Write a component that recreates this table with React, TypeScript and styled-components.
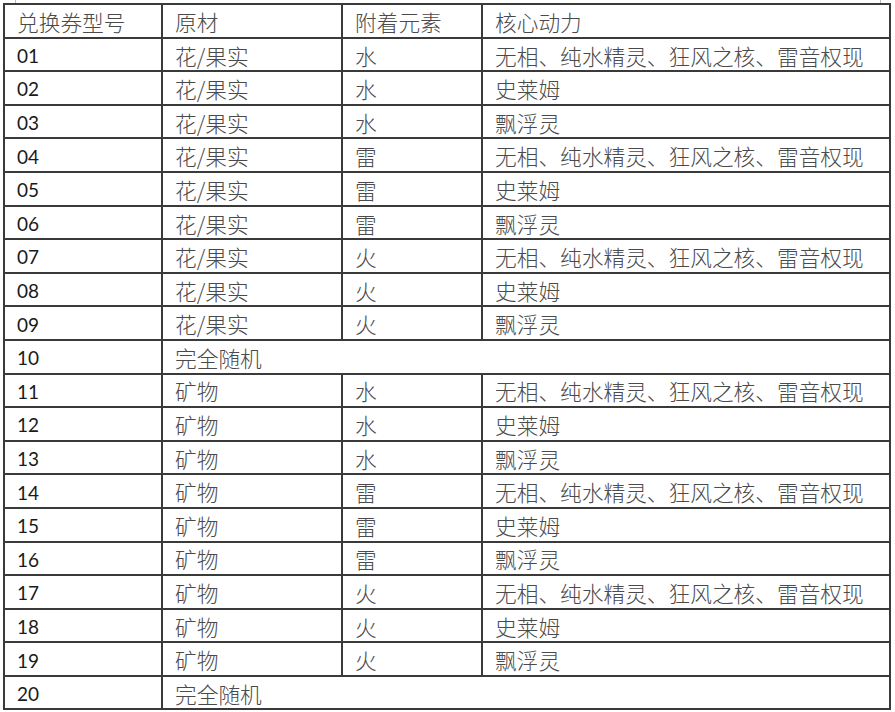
import styled, { createGlobalStyle } from "styled-components";

const GlobalStyle = createGlobalStyle`
  html, body {
    margin: 0;
    padding: 0;
    background: #ffffff;
  }
  body {
    font-family: "Noto Sans CJK SC", sans-serif;
  }
`;

// 兑换券一览
type Row = {
  id: string;
  material: string;
  element?: string;
  core?: string;
};

const CORES = ["无相、纯水精灵、狂风之核、雷音权现", "史莱姆", "飘浮灵"];
const ELEMENTS = ["水", "雷", "火"];

const buildRows = (): Row[] => {
  const rows: Row[] = [];
  let n = 1;
  ["花/果实", "矿物"].forEach((material) => {
    ELEMENTS.forEach((element) => {
      CORES.forEach((core) => {
        rows.push({ id: String(n).padStart(2, "0"), material, element, core });
        n++;
      });
    });
    rows.push({ id: String(n).padStart(2, "0"), material: "完全随机" });
    n++;
  });
  return rows;
};

const rows = buildRows();

const App = (): JSX.Element => {
  return (
    <>
      <GlobalStyle />
      <Page>
        <Table>
          <colgroup>
            <col style={{ width: 158 }} />
            <col style={{ width: 180 }} />
            <col style={{ width: 140 }} />
            <col />
          </colgroup>
          <thead>
            <tr>
              <Cell>兑换券型号</Cell>
              <Cell>原材</Cell>
              <Cell>附着元素</Cell>
              <Cell>核心动力</Cell>
            </tr>
          </thead>
          <tbody>
            {rows.map((row) => (
              <tr key={row.id}>
                <Cell $num>{row.id}</Cell>
                {row.element ? (
                  <>
                    <Cell>{row.material}</Cell>
                    <Cell>{row.element}</Cell>
                    <Cell>{row.core}</Cell>
                  </>
                ) : (
                  <Cell colSpan={3}>{row.material}</Cell>
                )}
              </tr>
            ))}
          </tbody>
        </Table>
      </Page>
    </>
  );
};

const Page = styled.div`
  position: relative;
  padding: 3px 0 0 3px;
  width: 895px;
  height: 712px;
  box-sizing: border-box;
  overflow: hidden;

  /* Word 页面角标 */
  &::before,
  &::after {
    content: "";
    position: absolute;
    top: 0;
    width: 1px;
    height: 3px;
    background: #b8b8b8;
  }
  &::before {
    left: 15px;
  }
  &::after {
    left: 880px;
  }
`;

const Table = styled.table`
  border-collapse: collapse;
  table-layout: fixed;
  width: 888px;

  tr {
    height: 33.6px;
  }
`;

const Cell = styled.td<{ $num?: boolean }>`
  border: 2px solid #3a3a3a;
  padding: 2px 0 0 12px;
  text-align: left;
  white-space: nowrap;
  line-height: 1;
  font-family: ${({ $num }) =>
    $num ? `Lato, "Liberation Sans", sans-serif` : `"Noto Sans CJK SC", sans-serif`};
  font-size: ${({ $num }) => ($num ? "19px" : "21.7px")};
  font-weight: ${({ $num }) => ($num ? 400 : 300)};
  color: ${({ $num }) => ($num ? "#1a1a1a" : "#4a4a4a")};
`;

export default App;
